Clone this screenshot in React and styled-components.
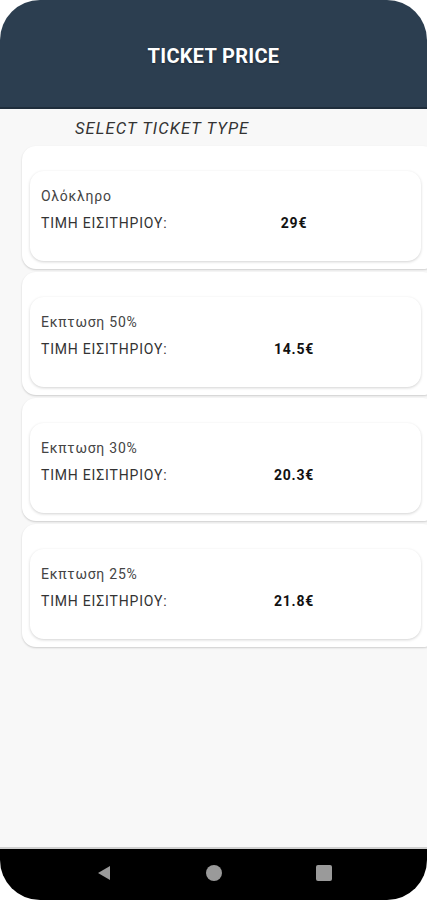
import React from 'react';
import styled, { createGlobalStyle } from 'styled-components';

const GlobalStyle = createGlobalStyle`
  html, body {
    margin: 0;
    padding: 0;
    background: #ffffff;
    font-family: Roboto, "Noto Sans", "Liberation Sans", sans-serif;
  }
`;

const tickets = [
  { name: 'Ολόκληρο', price: '29€' },
  { name: 'Εκπτωση 50%', price: '14.5€' },
  { name: 'Εκπτωση 30%', price: '20.3€' },
  { name: 'Εκπτωση 25%', price: '21.8€' },
];

const Screen = styled.div`
  width: 427px;
  height: 900px;
  display: flex;
  flex-direction: column;
  overflow: hidden;
  background: #ffffff;
`;

const Header = styled.header`
  height: 109px;
  flex-shrink: 0;
  box-sizing: border-box;
  padding-top: 4px;
  background: #2c3e50;
  border-radius: 40px 40px 0 0;
  border-bottom: 2px solid #1f2d3b;
  display: flex;
  align-items: center;
  justify-content: center;
`;

const Title = styled.h1`
  margin: 0;
  color: #ffffff;
  font-size: 20px;
  font-weight: 700;
  letter-spacing: 0.3px;
  text-shadow: 0 1px 2px rgba(0, 0, 0, 0.35);
`;

const Body = styled.main`
  flex: 1;
  background: #f8f8f8;
  display: flex;
  flex-direction: column;
  border-bottom: 2px solid #d0d0d0;
`;

const Subtitle = styled.div`
  padding: 10px 0 0 75px;
  height: 27px;
  font-size: 16.5px;
  font-style: italic;
  color: #333;
  letter-spacing: 1.1px;
`;

const List = styled.div`
  display: flex;
  flex-direction: column;
  gap: 3px;
  padding-left: 22px;
  margin-right: -10px;
`;

const Outer = styled.div`
  height: 123px;
  box-sizing: border-box;
  background: #ffffff;
  border-radius: 14px;
  padding: 25px 16px 8px 8px;
  box-shadow: 0 1px 2px rgba(0, 0, 0, 0.18);
`;

const Inner = styled.div`
  height: 100%;
  box-sizing: border-box;
  background: #ffffff;
  border-radius: 14px;
  padding: 16px 11px;
  box-shadow: 0 1px 3px rgba(0, 0, 0, 0.18);
  display: flex;
  flex-direction: column;
  gap: 8px;
`;

const Name = styled.div`
  font-size: 14px;
  color: #444;
  line-height: 19px;
  letter-spacing: 0.75px;
`;

const Row = styled.div`
  display: grid;
  grid-template-columns: 200px 106px;
  font-size: 14px;
  line-height: 19px;
  letter-spacing: 0.8px;
`;

const Label = styled.span`
  color: #333;
`;

const Price = styled.span`
  justify-self: center;
  color: #111;
  font-weight: 700;
`;

const NavBar = styled.nav`
  height: 51px;
  flex-shrink: 0;
  background: #000;
  border-radius: 0 0 40px 40px;
  display: flex;
  align-items: center;
  justify-content: center;
  gap: 94px;
  padding-bottom: 4px;
  box-sizing: border-box;
`;

const NavIcon = styled.svg`
  width: 16px;
  height: 16px;
  fill: #9a9a9a;
`;

export default function App() {
  return (
    <Screen>
      <GlobalStyle />
      <Header>
        <Title>TICKET PRICE</Title>
      </Header>
      <Body>
        <Subtitle>SELECT TICKET TYPE</Subtitle>
        <List>
          {tickets.map((t) => (
            <Outer key={t.name}>
              <Inner>
                <Name>{t.name}</Name>
                <Row>
                  <Label>ΤΙΜΗ ΕΙΣΙΤΗΡΙΟΥ:</Label>
                  <Price>{t.price}</Price>
                </Row>
              </Inner>
            </Outer>
          ))}
        </List>
      </Body>
      <NavBar>
        <NavIcon viewBox="0 0 16 16">
          <path d="M2 8 L14 1 L14 15 Z" />
        </NavIcon>
        <NavIcon viewBox="0 0 16 16">
          <circle cx="8" cy="8" r="8" />
        </NavIcon>
        <NavIcon viewBox="0 0 16 16">
          <rect x="0" y="0" width="16" height="16" rx="2" />
        </NavIcon>
      </NavBar>
    </Screen>
  );
}
